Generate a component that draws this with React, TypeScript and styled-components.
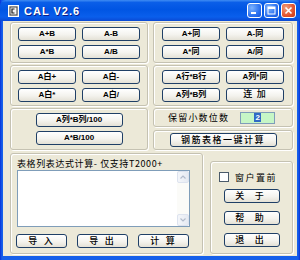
import React from "react";
import styled, { createGlobalStyle } from "styled-components";

const Global = createGlobalStyle`
  html, body { margin: 0; padding: 0; background: #ffffff; }
  body {
    width: 300px; height: 260px; overflow: hidden;
    font-family: "Liberation Sans", "Noto Sans CJK SC", sans-serif;
  }
`;

const Window = styled.div`
  width: 300px;
  height: 260px;
  box-sizing: border-box;
  display: flex;
  flex-direction: column;
  background: linear-gradient(to right, #0831d9 0px, #1660ea 2px, #1660ea 298px, #0831d9 300px);
`;

const TitleBar = styled.div`
  height: 21px;
  flex: none;
  display: flex;
  align-items: center;
  padding: 0 4px 0 8px;
  background: linear-gradient(
    to bottom,
    #3f8cf3 0%,
    #0a5ee8 12%,
    #0055e3 45%,
    #0a5fec 80%,
    #0a49d4 100%
  );
  border-radius: 6px 6px 0 0;
`;

const Title = styled.span`
  margin-left: 5px;
  color: #ffffff;
  font-family: "Liberation Sans", sans-serif;
  font-weight: bold;
  font-size: 11px;
  letter-spacing: 1px;
  text-shadow: 1px 1px 0 #0a1e8c;
  flex: 1;
`;

const CaptionGroup = styled.div`
  display: flex;
  gap: 2px;
  align-items: center;
`;

const CaptionButton = styled.div<{ $close?: boolean }>`
  width: 15px;
  height: 15px;
  box-sizing: border-box;
  border: 1px solid #ffffff;
  border-radius: 3px;
  display: flex;
  align-items: center;
  justify-content: center;
  background: ${(p) =>
    p.$close
      ? "radial-gradient(circle at 30% 30%, #f0a080, #e2532e 60%, #c23a16)"
      : "radial-gradient(circle at 30% 30%, #7cb3ff, #2d72f0 60%, #1553d8)"};
`;

const Client = styled.div`
  flex: 1;
  margin: 0 3px 4px 3px;
  background: #ece9d8;
  display: flex;
  flex-direction: column;
  padding: 1px 4px 2px 7px;
  gap: 2px;
`;

const Row = styled.div<{ $h: number; $gap?: number; $top?: number }>`
  display: flex;
  height: ${(p) => p.$h}px;
  gap: ${(p) => p.$gap ?? 5}px;
  margin-top: ${(p) => p.$top ?? 0}px;
  flex: none;
`;

const Group = styled.div<{ $w?: number; $top?: number }>`
  box-sizing: border-box;
  width: ${(p) => (p.$w ? `${p.$w}px` : "auto")};
  flex: ${(p) => (p.$w ? "none" : "1")};
  margin-top: ${(p) => p.$top ?? 0}px;
  border: 1px solid #c5c2b2;
  border-radius: 3px;
  box-shadow: inset 1px 1px 0 #ffffff, 1px 1px 0 #ffffff;
`;

const ButtonGrid = styled(Group)`
  display: grid;
  grid-template-columns: 58px 58px;
  grid-auto-rows: 14px;
  column-gap: 6px;
  row-gap: 4px;
  justify-content: center;
  align-content: center;
`;

const StackGroup = styled(Group)<{ $pt?: number; $gap?: number; $pl?: number }>`
  display: flex;
  flex-direction: column;
  align-items: center;
  justify-content: center;
  gap: ${(p) => p.$gap ?? 4}px;
`;

const Column = styled.div<{ $w: number }>`
  width: ${(p) => p.$w}px;
  display: flex;
  flex-direction: column;
  gap: 3px;
`;

const Button = styled.div<{ $w?: number; $cjk?: boolean; $ls?: number }>`
  box-sizing: border-box;
  height: 14px;
  width: ${(p) => (p.$w ? `${p.$w}px` : "auto")};
  border: 1px solid #1f3f66;
  border-radius: 3px;
  background: linear-gradient(to bottom, #ffffff 0%, #f4f3ee 55%, #e4e1d6 100%);
  display: flex;
  align-items: center;
  justify-content: center;
  color: #000000;
  font-size: ${(p) => (p.$cjk ? 9 : 8)}px;
  font-weight: ${(p) => (p.$cjk ? 500 : 700)};
  letter-spacing: ${(p) => p.$ls ?? 0}px;
  white-space: pre;
  line-height: 1;
`;

const DecimalsGroup = styled(Group)`
  display: flex;
  align-items: center;
  padding-left: 14px;
  gap: 11px;
`;

const Label = styled.span<{ $ls?: number }>`
  font-family: "Noto Sans CJK SC", sans-serif;
  font-size: 9px;
  letter-spacing: ${(p) => p.$ls ?? 1}px;
  color: #000000;
  white-space: pre;
  line-height: 1;
`;

const NumberBox = styled.div`
  box-sizing: border-box;
  width: 35px;
  height: 12px;
  border: 1px solid #7f9db9;
  background: #c6f6c6;
  display: flex;
  align-items: center;
  justify-content: center;
  font-size: 8px;
  font-weight: bold;
`;

const Selected = styled.span`
  background: #316ac5;
  color: #ffffff;
  padding: 0 1px;
  line-height: 9px;
`;

const ExprGroup = styled(Group)`
  display: flex;
  flex-direction: column;
  padding: 5px 0 0 6px;
`;

const ExprTitle = styled(Label)`
  height: 10px;
  letter-spacing: 0.6px;
  color: #000000;
`;

const TextArea = styled.div`
  box-sizing: border-box;
  margin-top: 1px;
  width: 173px;
  height: 57px;
  border: 1px solid #7f9db9;
  background: #ffffff;
  display: flex;
  justify-content: flex-end;
`;

const ScrollBar = styled.div`
  width: 12px;
  display: flex;
  flex-direction: column;
  justify-content: space-between;
  background: #fbfbf8;
`;

const ScrollArrow = styled.div`
  box-sizing: border-box;
  height: 12px;
  border: 1px solid #dde3ef;
  border-radius: 2px;
  background: linear-gradient(to right, #f4f6fa, #e6eaf2);
  display: flex;
  align-items: center;
  justify-content: center;
`;

const ActionRow = styled.div`
  display: flex;
  gap: 10px;
  margin-top: 7px;
  margin-left: -1px;
`;

const SideGroup = styled(Group)`
  display: flex;
  flex-direction: column;
  align-items: center;
  padding-top: 10px;
  gap: 8px;
`;

const CheckRow = styled.label`
  display: flex;
  align-items: center;
  gap: 6px;
  height: 10px;
  margin-bottom: -1px;
  align-self: flex-start;
  margin-left: 8px;
`;

const CheckBox = styled.span`
  box-sizing: border-box;
  width: 10px;
  height: 10px;
  border: 1px solid #4a5a6a;
  background: #ffffff;
`;

function AppIcon() {
  return (
    <svg width="11" height="12" viewBox="0 0 11 12">
      <rect x="0.5" y="0.5" width="10" height="11" fill="#d8d8d8" stroke="#ffffff" />
      <rect x="2" y="2" width="7" height="8" fill="#f2f2f2" stroke="#404040" strokeWidth="1" />
      <path d="M6.5 4 H4 V8 H6.5" fill="none" stroke="#202020" strokeWidth="1.2" />
    </svg>
  );
}

function Arrow({ up }: { up?: boolean }) {
  return (
    <svg width="6" height="4" viewBox="0 0 6 4">
      <path
        d={up ? "M0.5 3.5 L3 1 L5.5 3.5" : "M0.5 0.5 L3 3 L5.5 0.5"}
        fill="none"
        stroke="#b3bccc"
        strokeWidth="1.2"
      />
    </svg>
  );
}

export default function App() {
  return (
    <>
      <Global />
      <Window>
        <TitleBar>
          <AppIcon />
          <Title>CAL V2.6</Title>
          <CaptionGroup>
            <CaptionButton>
              <svg width="9" height="9" viewBox="0 0 9 9">
                <rect x="1" y="6" width="5" height="2" fill="#ffffff" />
              </svg>
            </CaptionButton>
            <CaptionButton>
              <svg width="9" height="9" viewBox="0 0 9 9">
                <rect x="1" y="1" width="7" height="7" fill="none" stroke="#ffffff" strokeWidth="1" />
                <rect x="1" y="1" width="7" height="2" fill="#ffffff" />
              </svg>
            </CaptionButton>
            <CaptionButton $close>
              <svg width="9" height="9" viewBox="0 0 9 9">
                <path d="M1.5 1.5 L7.5 7.5 M7.5 1.5 L1.5 7.5" stroke="#ffffff" strokeWidth="1.6" />
              </svg>
            </CaptionButton>
          </CaptionGroup>
        </TitleBar>
        <Client>
          <Row $h={41}>
            <ButtonGrid $w={138}>
              <Button>A+B</Button>
              <Button>A-B</Button>
              <Button>A*B</Button>
              <Button>A/B</Button>
            </ButtonGrid>
            <ButtonGrid $w={140}>
              <Button>A+同</Button>
              <Button>A-同</Button>
              <Button>A*同</Button>
              <Button>A/同</Button>
            </ButtonGrid>
          </Row>
          <Row $h={41}>
            <ButtonGrid $w={138}>
              <Button>A白+</Button>
              <Button>A白-</Button>
              <Button>A白*</Button>
              <Button>A白/</Button>
            </ButtonGrid>
            <ButtonGrid $w={140}>
              <Button>A行*B行</Button>
              <Button>A列*同</Button>
              <Button>A列*B列</Button>
              <Button $cjk $ls={1}>连 加</Button>
            </ButtonGrid>
          </Row>
          <Row $h={42}>
            <StackGroup $w={138}>
              <Button $w={87}>A列*B列/100</Button>
              <Button $w={87}>A*B/100</Button>
            </StackGroup>
            <Column $w={140}>
              <DecimalsGroup style={{ height: 19, flex: "none" }}>
                <Label $ls={1.2}>保留小数位数</Label>
                <NumberBox>
                  <Selected>2</Selected>
                </NumberBox>
              </DecimalsGroup>
              <StackGroup>
                <Button $w={107} $cjk $ls={1.5}>钢筋表格一键计算</Button>
              </StackGroup>
            </Column>
          </Row>
          <Row $h={101} $gap={7} $top={1}>
            <ExprGroup $w={193}>
              <ExprTitle>表格列表达式计算- 仅支持T2000+</ExprTitle>
              <TextArea>
                <ScrollBar>
                  <ScrollArrow>
                    <Arrow up />
                  </ScrollArrow>
                  <ScrollArrow>
                    <Arrow />
                  </ScrollArrow>
                </ScrollBar>
              </TextArea>
              <ActionRow>
                <Button $w={51} $cjk $ls={2}>导 入</Button>
                <Button $w={51} $cjk $ls={2}>导 出</Button>
                <Button $w={51} $cjk $ls={2}>计 算</Button>
              </ActionRow>
            </ExprGroup>
            <SideGroup $w={83} $top={8}>
              <CheckRow>
                <CheckBox />
                <Label $ls={1.5}>窗户置前</Label>
              </CheckRow>
              <Button $w={56} $cjk $ls={4}>关 于</Button>
              <Button $w={56} $cjk $ls={4}>帮 助</Button>
              <Button $w={56} $cjk $ls={4}>退 出</Button>
            </SideGroup>
          </Row>
        </Client>
      </Window>
    </>
  );
}
